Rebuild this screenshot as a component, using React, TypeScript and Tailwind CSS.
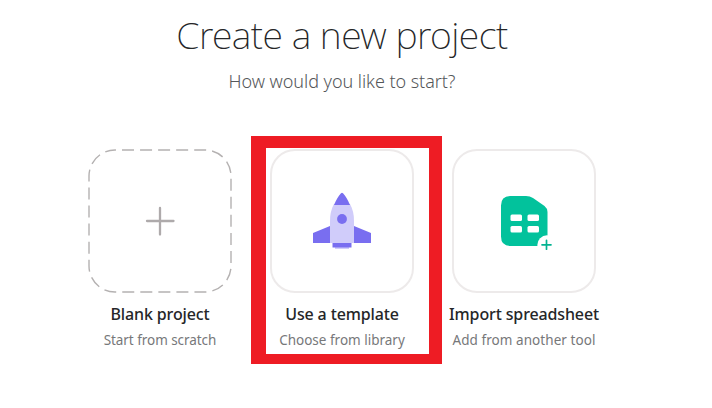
import type { ReactNode } from "react";

function Plus() {
  return (
    <svg width="30" height="30" viewBox="0 0 30 30" fill="none" stroke="#aeaaab" strokeWidth="2.300" strokeLinecap="round">
      <path d="M15 2v26.500M2 15h26.500" />
    </svg>
  );
}

function Rocket() {
  return (
    <svg width="58" height="58" viewBox="0 0 58 58">
      <path d="M0 41L17 34v17H0zM58 41L41 34v17H58z" fill="#796ef0" />
      <path d="M22 55h14v2H22z" fill="#d0ccfa" />
      <path d="M17 51V29c0-7 1.300-12 4-17h16c2.700 5 4 10 4 17v22z" fill="#d0ccfa" />
      <path d="M19.500 51h19v4.500h-19z" fill="#796ef0" />
      <path d="M21 13C23 8 25.500 4 28 1.200q1-.8 2 0C32.500 4 35 8 37 13z" fill="#796ef0" />
      <circle cx="29" cy="27" r="4.900" fill="#796ef0" />
    </svg>
  );
}

function Sheet() {
  return (
    <svg className="relative top-[2px] left-[3px]" width="52" height="54" viewBox="0 0 52 54">
      <path d="M9.500 0H25q4 0 7 2l11.500 8q3 2.400 3 6V40q-10 1-8.500 10H9.500Q0 50 0 40.500V9.500Q0 0 9.500 0z" fill="#02c29c" />
      <g fill="#fff">
        <rect x="9.500" y="18.500" width="11.500" height="6.500" rx="1.500" />
        <rect x="26.500" y="18.500" width="11.500" height="6.500" rx="1.500" />
        <rect x="9.500" y="30" width="11.500" height="6.500" rx="1.500" />
        <rect x="26.500" y="30" width="11.500" height="6.500" rx="1.500" />
        <circle cx="46" cy="49" r="9.700" />
      </g>
      <path d="M45.500 44.300v9M41 48.800h9" stroke="#02b391" strokeWidth="1.700" strokeLinecap="round" />
    </svg>
  );
}

function Option({ title, note, dashed, noteClass, children }: {
  title: string;
  note: string;
  dashed?: boolean;
  noteClass: string;
  children: ReactNode;
}) {
  return (
    <div className="relative flex w-[182px] flex-col items-center">
      {dashed ? (
        <div className="relative flex size-[144px] items-center justify-center">
          <svg className="absolute inset-0" width="144" height="144" fill="none">
            <rect x="1" y="1" width="142" height="142" rx="26" stroke="#b4b1b1" strokeWidth="1.400" strokeDasharray="12 6.050" strokeDashoffset="-7" />
          </svg>
          {children}
        </div>
      ) : (
        <div className="flex size-[144px] items-center justify-center rounded-[25px] border-2 border-[#edeaea]">{children}</div>
      )}
      <div className="mt-[9px] h-6 whitespace-nowrap text-base leading-6 font-medium tracking-[-0.130px] text-[#252628]">{title}</div>
      <div className={`mt-[4px] h-5 whitespace-nowrap text-[13.500px] leading-5 text-[#77787a] ${noteClass}`}>{note}</div>
    </div>
  );
}

export default function App() {
  return (
    <main className="h-[408px] w-[712px] overflow-hidden bg-white font-['Noto_Sans','Open_Sans',sans-serif]">
      <div className="flex w-[684px] flex-col items-center">
        <h1 className="mt-[9px] h-[52px] whitespace-nowrap text-[37.500px] leading-[52px] font-extralight tracking-[-0.550px] text-[#252628]">Create a new project</h1>
        <p className="mt-[8px] h-6 whitespace-nowrap text-[18px] leading-6 font-light tracking-[-0.050px] text-[#55575a]">How would you like to start?</p>
        <div className="mt-[56px] flex">
          <Option title="Blank project" note="Start from scratch" noteClass="tracking-[-0.050px]" dashed><Plus /></Option>
          <div className="relative">
            <div className="absolute -top-[13px] left-0 h-[228px] w-[191px] border-t-[12px] border-r-[13px] border-b-[10px] border-l-[15px] border-[#ee1c24]" />
            <Option title="Use a template" note="Choose from library" noteClass=""><Rocket /></Option>
          </div>
          <Option title="Import spreadsheet" note="Add from another tool" noteClass="tracking-[0.060px]"><Sheet /></Option>
        </div>
      </div>
    </main>
  );
}
